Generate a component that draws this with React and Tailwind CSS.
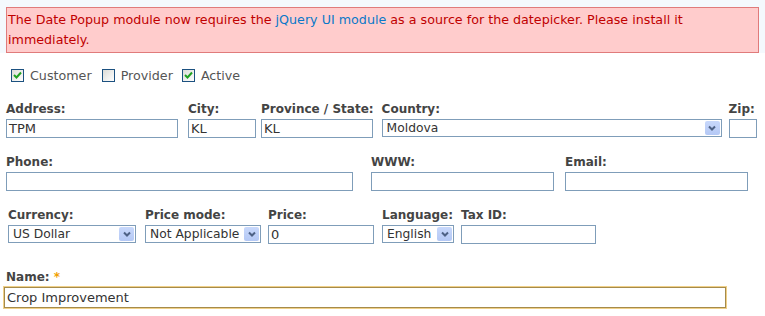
import React from "react";

function Check({ checked }) {
  return (
    <span className="inline-flex h-[13px] w-[13px] items-center justify-center border border-[#1c5180] bg-gradient-to-br from-[#dcdcd7] to-white">
      {checked && (
        <svg width="9" height="9" viewBox="0 0 9 9">
          <path d="M1 4 L3.5 6.5 L8 1.5" stroke="#21a121" strokeWidth="2" fill="none" />
        </svg>
      )}
    </span>
  );
}

function Field({ label, width, value, className = "" }) {
  return (
    <div className={`flex flex-col ${className}`}>
      <span className="h-[20px] text-[12px] font-bold leading-[20px] text-[#444]">{label}</span>
      <div
        className="h-[19px] border border-[#7f9db9] bg-white pl-[2px] text-[13px] leading-[17px] text-[#333]"
        style={{ width }}
      >
        {value}
      </div>
    </div>
  );
}

function Select({ label, width, value, className = "" }) {
  return (
    <div className={`flex flex-col ${className}`}>
      <span className="h-[20px] text-[12px] font-bold leading-[20px] text-[#444]">{label}</span>
      <div
        className="flex h-[18px] items-center justify-between border border-[#7f9db9] bg-white pl-[4px] pr-[1px] text-[12.3px] text-[#333]"
        style={{ width }}
      >
        <span className="leading-[16px]">{value}</span>
        <span className="flex h-[14px] w-[15px] items-center justify-center rounded-[2px] bg-gradient-to-b from-[#c8d8fb] to-[#b4c8f5]">
          <svg width="8" height="6" viewBox="0 0 8 6">
            <path d="M1 1.5 L4 4.5 L7 1.5" stroke="#4d6185" strokeWidth="2" fill="none" />
          </svg>
        </span>
      </div>
    </div>
  );
}

export default function App() {
  return (
    <div className="h-[316px] w-[765px] overflow-hidden bg-white font-['DejaVu_Sans',Verdana,sans-serif]">
      <div className="bg-[#f4f9fd] pt-[7px]">
        <div className="mx-[6px] border border-[#e07b7b] bg-[#ffcccc] px-[1px] py-[2px] text-[12.7px] leading-[20px] text-[#c00000]">
          The Date Popup module now requires the <span className="text-[#0a78c8]">jQuery UI module</span> as a
          source for the datepicker. Please install it immediately.
        </div>
      </div>

      <div className="mt-[13px] flex items-center pl-[11px] text-[12.7px] text-[#555]">
        <Check checked />
        <span className="ml-[6px] mr-[10px]">Customer</span>
        <Check />
        <span className="ml-[6px] mr-[9px]">Provider</span>
        <Check checked />
        <span className="ml-[6px]">Active</span>
      </div>

      <div className="mt-[14px] flex px-[6px]">
        <Field label="Address:" width={172} value="TPM" />
        <Field label="City:" width={68} value="KL" className="ml-[10px]" />
        <Field label="Province / State:" width={112} value="KL" className="ml-[5px]" />
        <Select label="Country:" width={340} value="Moldova" className="ml-[8px]" />
        <Field label="Zip:" width={28} value="" className="ml-[7px]" />
      </div>

      <div className="mt-[14px] flex px-[6px]">
        <Field label="Phone:" width={347} value="" />
        <Field label="WWW:" width={183} value="" className="ml-[18px]" />
        <Field label="Email:" width={183} value="" className="ml-[11px]" />
      </div>

      <div className="mt-[14px] flex px-[6px]">
        <Select label="Currency:" width={128} value="US Dollar" className="ml-[2px]" />
        <Select label="Price mode:" width={116} value="Not Applicable" className="ml-[9px]" />
        <Field label="Price:" width={106} value="0" className="ml-[7px]" />
        <Select label="Language:" width={72} value="English" className="ml-[8px]" />
        <Field label="Tax ID:" width={135} value="" className="ml-[7px]" />
      </div>

      <div className="mt-[23px] flex flex-col px-[4px]">
        <span className="ml-[2px] h-[20px] text-[12px] font-bold leading-[20px] text-[#444]">
          Name: <span className="text-[#f0a000]">*</span>
        </span>
        <div className="h-[21px] w-[722px] border border-[#a58b4c] pl-[2px] text-[13px] leading-[19px] text-[#333] shadow-[0_0_0_1px_#f0d088]">
          Crop Improvement
        </div>
      </div>
    </div>
  );
}
